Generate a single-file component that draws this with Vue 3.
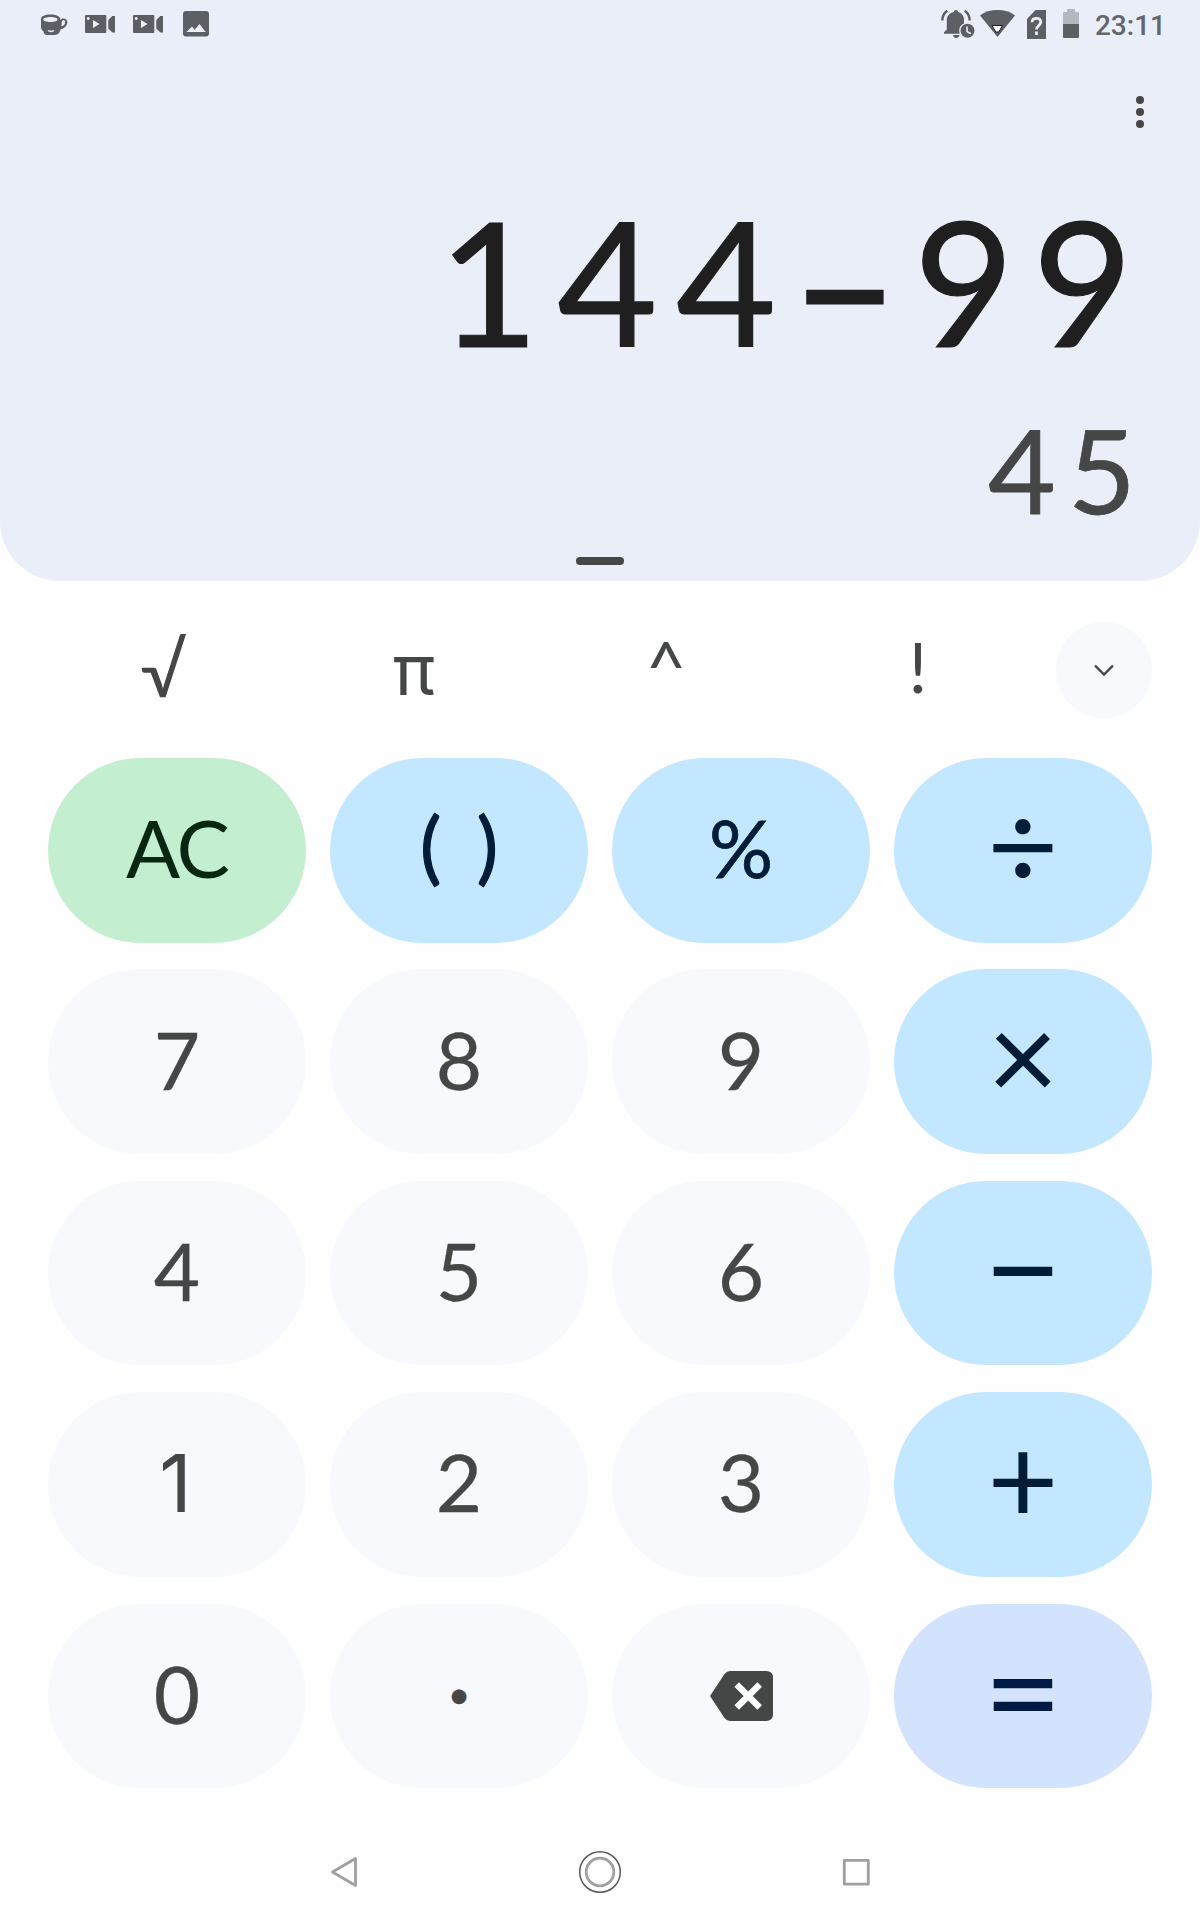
<template>
  <div class="calc">
    <section class="panel">
      <header class="status">
        <div class="status_left">
          <svg class="ic_cup" viewBox="0 0 28 48">
            <path fill-rule="evenodd" d="M1 19c0-2.600 4-4.400 9.500-4.400 5 0 8.500 1.300 9.500 3.400l.5 2c.6-1.100 1.700-1.600 3-1.600 2.300 0 3.800 1.500 3.800 3.800 0 3.600-2.800 6.300-6.800 7.200-.6 2.300-1.500 5.600-7 5.600H8c-3.400 0-4.300-2-4.500-3.600C1.600 30 1 28.500 1 26.500zM10.500 17c-4.200 0-7.300 1-7.300 2.500S6.300 22 10.500 22s7-1 7-2.500-2.800-2.500-7-2.500zM21.500 26.500c2.400-.8 3.600-2.300 3.600-4.200 0-1.400-.6-2-1.600-2-1.200 0-1.600.7-1.800 2z" />
            <path class="smile" d="M8 30.500c1.500 1.200 4.500 1.200 6 0" />
          </svg>
          <svg v-for="n in 2" :key="n" class="ic_cam" viewBox="0 0 30 48">
            <path fill-rule="evenodd" d="M1 15h19.500q.8 0 .8.800v16.400q0 .8-.8.800H1q-1 0-1-1V16q0-1 1-1zM8 20v8l6.500-4zM3.200 17a1.500 1.500 0 1 0 .01 0z" />
            <path d="M23.300 20l4-4H30v16.500h-2.700l-4-4z" />
          </svg>
          <svg class="ic_img" viewBox="0 0 26 48">
            <path fill-rule="evenodd" d="M3 11h20q3 0 3 3v19.500q0 3-3 3H3q-3 0-3-3V14q0-3 3-3zM3.500 32h19.200l-6.200-8-4.800 5.800-2.700-3.200z" />
          </svg>
        </div>
        <div class="status_right">
          <svg class="ic_bell" viewBox="0 0 34 48">
            <path d="M15 10c1.300 0 2 .8 2 2 4 1 6 4 6 8v3.500c-2.600 1-4.800 3.500-4.800 7 0 1.200.2 2.300.7 3.300H3v-1.600L5.800 29.500V20c0-4 2.500-7 7-8 0-1.200.9-2 2.200-2zM12 35h6.500c-.3 1.800-1.500 3-3.200 3S12.300 36.800 12 35z" />
            <path class="line" d="M1.300 20.500c0-4 1.600-7.500 5-9.800M28.700 20.500c0-4-1.600-7.500-5-9.800" />
            <circle cx="26.500" cy="30.800" r="7" />
            <path class="hand" d="M26 26.500v5l4 2.300" />
          </svg>
          <svg class="ic_wifi" viewBox="0 0 35 48">
            <path d="M0 15.500C9 8.200 26 8.200 35 15.500L17.500 37z" />
            <path class="wifi_mark" d="M12 25.500h10.500l-3.700 6.500h-3z" />
          </svg>
          <svg class="ic_sim" viewBox="0 0 19 48">
            <path d="M8.500 10H19v29H0V19z" />
            <path class="ask" d="M5 22.300c0-2.600 1.800-4 4.500-4s4.300 1.500 4.300 3.800c0 3.400-4.300 3.600-4.300 7.300M9.500 31.500v3.500" />
          </svg>
          <svg class="ic_bat" viewBox="0 0 16 48">
            <path class="bat_empty" d="M4 9h8v3h3q1 0 1 1v11H0V13q0-1 1-1h3z" />
            <path d="M0 24h16v13q0 1-1 1H1q-1 0-1-1z" />
          </svg>
          <span class="clock">23:11</span>
        </div>
      </header>

      <div class="toolbar">
        <button class="more" aria-label="More options">
          <i></i><i></i><i></i>
        </button>
      </div>

      <div class="formula">
        <span v-for="(ch, i) in formula" :key="i" :class="{ minus: ch === '−' }">{{ ch }}</span>
      </div>
      <div class="result">
        <span v-for="(ch, i) in result" :key="i">{{ ch }}</span>
      </div>
      <div class="handle"></div>
    </section>

    <div class="extra">
      <button v-for="fn in extra" :key="fn.text" class="extra_btn" :class="fn.name">
        <span>{{ fn.text }}</span>
      </button>
      <button class="expand" aria-label="Expand">
        <svg viewBox="0 0 24 14"><path d="M3 2.500l9 9 9-9" /></svg>
      </button>
    </div>

    <main class="keypad">
      <button v-for="key in keys" :key="key.name" class="key" :class="[key.type, 'k_' + key.name]">
        <svg v-if="key.name === 'del'" class="backspace" viewBox="0 0 63 50">
          <path d="M0 25L14.500 3Q17 0 20 0H56Q63 0 63 6.500V43.500Q63 50 56 50H20Q17 50 14.500 47z" />
          <path class="cross" d="M26.700 13.500l23 23M49.700 13.500l-23 23" />
        </svg>
        <span v-else>{{ key.text }}</span>
      </button>
    </main>

    <nav class="navbar">
      <button aria-label="Back">
        <svg viewBox="0 0 44 44"><path class="nav_line" d="M33.500 8.500v27L10.500 22z" /></svg>
      </button>
      <button aria-label="Home">
        <svg viewBox="0 0 44 44">
          <circle class="nav_ring" cx="22" cy="22" r="20.300" />
          <circle class="nav_line" cx="22" cy="22" r="13.800" />
        </svg>
      </button>
      <button aria-label="Recents">
        <svg viewBox="0 0 44 44"><path class="nav_line" d="M10.300 10.300h24v23.800h-24z" /></svg>
      </button>
    </nav>
  </div>
</template>

<script setup>
import { ref } from 'vue'

const formula = ref('144−99')
const result = ref('45')

const extra = [
  { name: 'sqrt', text: '√' },
  { name: 'pi', text: 'π' },
  { name: 'pow', text: '^' },
  { name: 'fact', text: '!' },
]

const keys = [
  { name: 'ac', text: 'AC', type: 'clear' },
  { name: 'par', text: '( )', type: 'op' },
  { name: 'pct', text: '%', type: 'op' },
  { name: 'div', text: '÷', type: 'op' },
  { name: '7', text: '7', type: 'num' },
  { name: '8', text: '8', type: 'num' },
  { name: '9', text: '9', type: 'num' },
  { name: 'mul', text: '×', type: 'op' },
  { name: '4', text: '4', type: 'num' },
  { name: '5', text: '5', type: 'num' },
  { name: '6', text: '6', type: 'num' },
  { name: 'sub', text: '−', type: 'op' },
  { name: '1', text: '1', type: 'num' },
  { name: '2', text: '2', type: 'num' },
  { name: '3', text: '3', type: 'num' },
  { name: 'add', text: '+', type: 'op' },
  { name: '0', text: '0', type: 'num' },
  { name: 'dot', text: '•', type: 'num' },
  { name: 'del', text: '', type: 'num' },
  { name: 'eq', text: '=', type: 'equal' },
]
</script>

<style>
body {
  background: #fefefe;
}
</style>

<style scoped>
.calc {
  display: flex;
  flex-direction: column;
  width: 1200px;
  height: 1920px;
  overflow: hidden;
  font-family: Lato, 'Liberation Sans', sans-serif;
  color: #444746;
}
button {
  display: flex;
  align-items: center;
  justify-content: center;
  padding: 0;
  border: none;
  background: none;
  font: inherit;
  color: inherit;
  cursor: pointer;
}
svg {
  display: block;
}

/* display panel */
.panel {
  display: flex;
  flex-direction: column;
  flex: none;
  height: 581px;
  background: #eaeef9;
  border-radius: 0 0 60px 60px;
}
.status {
  display: flex;
  justify-content: space-between;
  height: 48px;
  padding: 0 34px 0 40px;
  fill: #5c5f63;
}
.status_left,
.status_right {
  display: flex;
  align-items: center;
}
.status svg {
  height: 48px;
}
.ic_cup {
  width: 28px;
  margin-right: 17px;
}
.ic_cam {
  width: 30px;
  margin-right: 18px;
}
.ic_img {
  width: 26px;
  margin-left: 2px;
}
.ic_bell {
  width: 34px;
  margin-right: 5px;
}
.ic_wifi {
  width: 35px;
  margin-right: 12px;
}
.ic_sim {
  width: 19px;
  margin-right: 17px;
}
.ic_bat {
  width: 16px;
  margin-right: 16px;
}
.smile,
.hand,
.ask {
  fill: none;
  stroke: #eaeef9;
  stroke-width: 1.6;
}
.ask {
  stroke-width: 2.8;
}
.line {
  fill: none;
  stroke: #5c5f63;
  stroke-width: 2.4;
}
.wifi_mark {
  fill: #fff;
  stroke: #222;
  stroke-width: 1;
}
.bat_empty {
  fill: #b3b7c1;
}
.clock {
  padding-top: 3px;
  font: 500 28px/50px Roboto, sans-serif;
  color: #63666b;
}

.toolbar {
  display: flex;
  justify-content: flex-end;
  height: 128px;
  padding-right: 36px;
}
.more {
  flex-direction: column;
  gap: 4px;
  width: 48px;
  height: 128px;
}
.more i {
  width: 8px;
  height: 8px;
  border-radius: 50%;
  background: #444746;
}

.formula,
.result {
  display: flex;
  justify-content: flex-end;
  text-align: center;
}
.formula {
  height: 174px;
  margin-top: 17px;
  padding-right: 58px;
  font-size: 173px;
  line-height: 174px;
  color: #1f1f1f;
  -webkit-text-stroke: 1.2px #1f1f1f;
}
.formula span {
  width: 118.8px;
}
/* the minus sits a little lower than the font places it */
.formula .minus {
  padding-top: 8px;
  -webkit-text-stroke-width: 3px;
}
.result {
  height: 118px;
  margin-top: 43px;
  padding-right: 58px;
  font-size: 117px;
  line-height: 118px;
  -webkit-text-stroke: 0.8px #444746;
}
.result span {
  width: 80px;
}
.handle {
  align-self: center;
  width: 48px;
  height: 8px;
  margin-top: 29px;
  border-radius: 4px;
  background: #444746;
}

/* extra functions */
.extra {
  display: flex;
  align-items: center;
  flex: none;
  height: 177px;
  padding: 0 48px 0 36px;
}
.extra_btn {
  width: 252px;
  height: 96px;
  padding-bottom: 8px;
  font-size: 70px;
  line-height: 96px;
}
.sqrt {
  padding: 0 0 1px 3px;
  font-size: 74px;
}
.pi {
  padding-bottom: 0;
  font-family: Inter, sans-serif;
  font-size: 70px;
}
.pow {
  padding-bottom: 10px;
}
.expand {
  width: 96px;
  height: 96px;
  margin-left: auto;
  border-radius: 50%;
  background: #f8f9fd;
}
.expand svg {
  width: 24px;
  height: 14px;
  fill: none;
  stroke: #444746;
  stroke-width: 2.4;
}

/* keypad */
.keypad {
  display: grid;
  grid-template-columns: repeat(4, 258px);
  grid-template-rows: repeat(5, 184.6px);
  gap: 26.8px 24px;
  flex: none;
  padding: 0 48px;
}
.key {
  padding-bottom: 6px;
  border-radius: 93px;
  font-size: 80px;
  line-height: 96px;
  -webkit-text-stroke: 0.3px currentColor;
}
.num {
  background: #f8f9fd;
}
.op {
  background: #c2e7ff;
  color: #001d35;
}
.clear {
  background: #c4eed0;
  color: #072711;
}
.equal {
  background: #d3e3fd;
  color: #001a43;
}
.k_ac {
  letter-spacing: -2px;
  -webkit-text-stroke-width: 0;
}
.k_par {
  padding-bottom: 13px;
  word-spacing: 15px;
  -webkit-text-stroke-width: 1.2px;
}
.k_pct {
  -webkit-text-stroke-width: 0.8px;
}
.k_1 {
  padding: 0 3px 2px 0;
  font-family: Inter, sans-serif;
  -webkit-text-stroke-width: 0;
}
.k_sub,
.k_eq {
  padding-bottom: 17px;
  font-size: 136px;
  -webkit-text-stroke-width: 0;
}
.k_eq {
  padding-bottom: 14px;
}
.k_div,
.k_mul,
.k_add {
  padding-bottom: 15px;
  font-size: 123px;
  -webkit-text-stroke-width: 0;
}
.k_del {
  padding: 0;
}
.backspace {
  width: 63px;
  height: 50px;
  fill: #444746;
}
.cross {
  stroke: #fff;
  stroke-width: 6.500;
}
.k_dot {
  font-size: 39px;
}

/* system navigation */
.navbar {
  display: flex;
  justify-content: center;
  align-items: center;
  height: 96px;
  margin-top: auto;
}
.navbar button {
  width: 256px;
}
.navbar svg {
  width: 44px;
  height: 44px;
  fill: none;
}
.nav_line {
  stroke: #a0a0a0;
  stroke-width: 2.8;
  stroke-linejoin: round;
}
.nav_ring {
  stroke: #5a5a5a;
  stroke-width: 1.5;
}
</style>
